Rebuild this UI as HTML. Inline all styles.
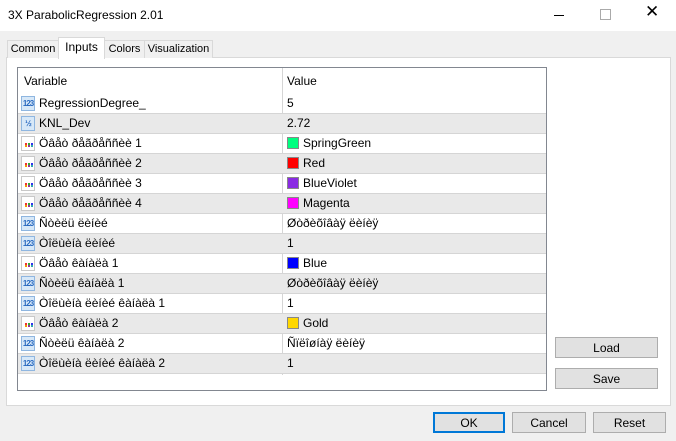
<!DOCTYPE html><html><head><meta charset="utf-8"><style>
body{margin:0;width:676px;height:441px;background:#f0f0f0;font-family:"Liberation Sans",sans-serif;font-size:12px;color:#000;position:relative;overflow:hidden}
.a{position:absolute}
.title{left:0;top:0;width:676px;height:31px;background:#fff}
.tab{position:absolute;top:40px;height:17px;border:1px solid #d9d9d9;border-bottom:none;background:#f0f0f0;line-height:17px;text-align:center;font-size:11px}
.panel{left:6px;top:57px;width:663px;height:347px;background:#fff;border:1px solid #d9d9d9}
.tbl{left:17px;top:67px;width:528px;height:322px;border:1px solid #828790;background:#fff}
.row{position:absolute;left:0;width:528px;height:19px;border-bottom:1px solid #d5d5d5;line-height:19px}
.g{background:#e9e9e9}
.c1{position:absolute;left:21px}
.c2{position:absolute;left:269px}
.div{position:absolute;left:264px;top:0;width:1px;height:307px;background:#d5d5d5}
.ic{position:absolute;left:3px;top:2px;width:14px;height:15px;background:#d7e8f8;border:1px solid #8fb6e0;box-sizing:border-box;font-size:8px;line-height:13px;color:#2a6ac0;text-align:center;font-weight:bold;letter-spacing:-1px}
.ic2{position:absolute;left:3px;top:2px;width:14px;height:15px;background:#fff;border:1px solid #c8c8c8;box-sizing:border-box}
.ic2:after{content:"";position:absolute;left:3px;top:6px;width:2px;height:2px;background:#e33;box-shadow:3px 0 #3a3,6px 0 #33e,0 2px #e90,3px 2px #939,6px 2px #3aa}
.sw{display:inline-block;width:12px;height:12px;vertical-align:-2px;margin-right:4px;border:1px solid #888;box-sizing:border-box}
.btn{position:absolute;height:21px;border:1px solid #adadad;background:#e1e1e1;text-align:center;line-height:20px;box-sizing:border-box}
</style></head><body>
<div class="a title"><span class="a" style="left:8px;top:8px;font-size:12px">3X ParabolicRegression 2.01</span>
<span class="a" style="left:554px;top:15px;width:10px;height:1px;background:#000"></span>
<span class="a" style="left:600px;top:9px;width:9px;height:9px;border:1px solid #aaa"></span>
<span class="a" style="left:645px;top:2px;font-size:17px">✕</span></div>
<div class="a panel"></div>
<div class="tab" style="left:7px;width:50px">Common</div>
<div class="tab" style="left:58px;top:37px;height:21px;width:45px;background:#fff;line-height:19px;z-index:2;font-size:12px">Inputs</div>
<div class="tab" style="left:104px;width:39px">Colors</div>
<div class="tab" style="left:144px;width:67px">Visualization</div>
<div class="a tbl">
<div class="div"></div>
<div class="row" style="top:0;height:26px;line-height:26px;border-bottom:none"><span class="c1" style="left:6px">Variable</span><span class="c2">Value</span></div>
<div class="row" style="top:26px"><span class="ic">123</span><span class="c1">RegressionDegree_</span><span class="c2">5</span></div>
<div class="row g" style="top:46px"><span class="ic">½</span><span class="c1">KNL_Dev</span><span class="c2">2.72</span></div>
<div class="row" style="top:66px"><span class="ic2"></span><span class="c1">Öâåò ðåãðåññèè 1</span><span class="c2"><span class="sw" style="background:#00ff7f"></span>SpringGreen</span></div>
<div class="row g" style="top:86px"><span class="ic2"></span><span class="c1">Öâåò ðåãðåññèè 2</span><span class="c2"><span class="sw" style="background:#f00"></span>Red</span></div>
<div class="row" style="top:106px"><span class="ic2"></span><span class="c1">Öâåò ðåãðåññèè 3</span><span class="c2"><span class="sw" style="background:#8a2be2"></span>BlueViolet</span></div>
<div class="row g" style="top:126px"><span class="ic2"></span><span class="c1">Öâåò ðåãðåññèè 4</span><span class="c2"><span class="sw" style="background:#f0f"></span>Magenta</span></div>
<div class="row" style="top:146px"><span class="ic">123</span><span class="c1">Ñòèëü ëèíèé</span><span class="c2">Øòðèõîâàÿ ëèíèÿ</span></div>
<div class="row g" style="top:166px"><span class="ic">123</span><span class="c1">Òîëùèíà ëèíèé</span><span class="c2">1</span></div>
<div class="row" style="top:186px"><span class="ic2"></span><span class="c1">Öâåò êàíàëà 1</span><span class="c2"><span class="sw" style="background:#00f"></span>Blue</span></div>
<div class="row g" style="top:206px"><span class="ic">123</span><span class="c1">Ñòèëü êàíàëà 1</span><span class="c2">Øòðèõîâàÿ ëèíèÿ</span></div>
<div class="row" style="top:226px"><span class="ic">123</span><span class="c1">Òîëùèíà ëèíèé êàíàëà 1</span><span class="c2">1</span></div>
<div class="row g" style="top:246px"><span class="ic2"></span><span class="c1">Öâåò êàíàëà 2</span><span class="c2"><span class="sw" style="background:#ffd700"></span>Gold</span></div>
<div class="row" style="top:266px"><span class="ic">123</span><span class="c1">Ñòèëü êàíàëà 2</span><span class="c2">Ñïëîøíàÿ ëèíèÿ</span></div>
<div class="row g" style="top:286px"><span class="ic">123</span><span class="c1">Òîëùèíà ëèíèé êàíàëà 2</span><span class="c2">1</span></div>
</div>
<div class="btn" style="left:555px;top:337px;width:103px">Load</div>
<div class="btn" style="left:555px;top:368px;width:103px">Save</div>
<div class="btn" style="left:433px;top:412px;width:72px;border:2px solid #0078d7;line-height:18px">OK</div>
<div class="btn" style="left:512px;top:412px;width:74px">Cancel</div>
<div class="btn" style="left:593px;top:412px;width:73px">Reset</div>
</body></html>
